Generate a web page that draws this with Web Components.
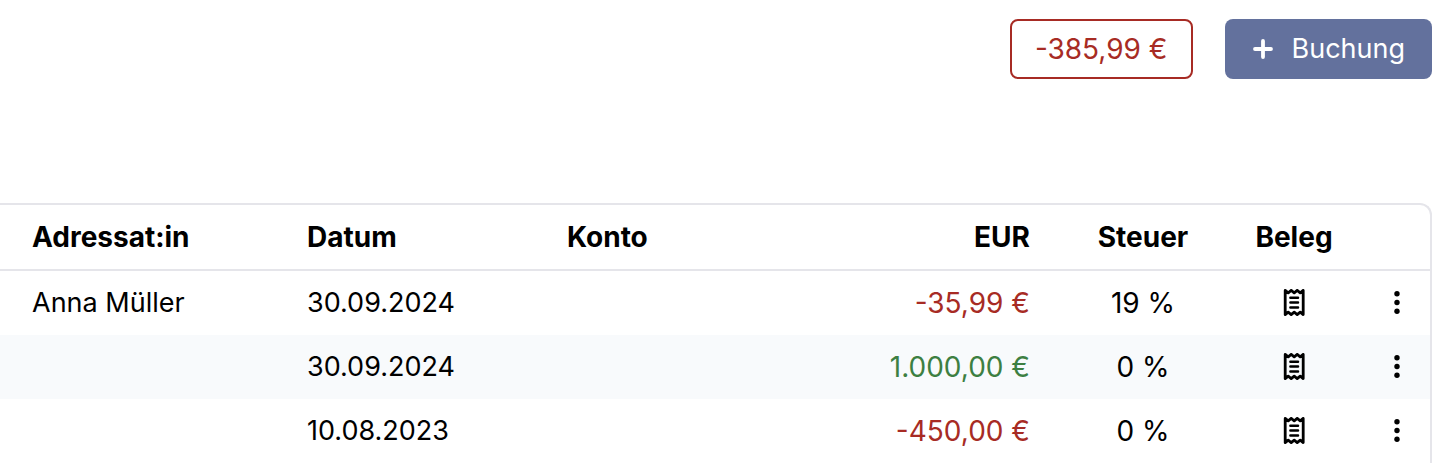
<!DOCTYPE html>
<html lang="de">
<head>
<meta charset="utf-8">
<meta name="viewport" content="width=device-width, initial-scale=1">
<title>Buchungen</title>
<style>
  body {
    margin: 0;
    background: #fff;
    color: #000;
    font: 28px/40px Inter, "Liberation Sans", sans-serif;
    --text-size: 27px;
    --negative: #a72b24;
    --positive: #3d7f42;
    --primary: #63719d;
    --line: #e5e5ea;
    --stripe: #f8fafc;
  }
</style>
</head>
<body>
<booking-page>
  <balance-badge slot="actions">-385,99 €</balance-badge>
  <add-button slot="actions">Buchung</add-button>
  <booking-table></booking-table>
</booking-page>

<script>
  const define = (name, html) => customElements.define(name, class extends HTMLElement {
    constructor() {
      super();
      this.attachShadow({ mode: 'open' }).innerHTML = html;
    }
  });

  define('booking-page', `
    <style>
      :host { display: block; padding: 19px 20px 0 0; }
      header { display: flex; justify-content: flex-end; gap: 32px; margin-bottom: 124px; }
    </style>
    <header><slot name="actions"></slot></header>
    <main><slot></slot></main>`);

  define('balance-badge', `
    <style>
      :host {
        display: block; box-sizing: border-box; padding: 8px 23px;
        border: 2px solid var(--negative); border-radius: 8px;
        color: var(--negative); white-space: nowrap;
      }
    </style>
    <slot></slot>`);

  define('add-button', `
    <style>
      :host { display: block; }
      button {
        display: flex; align-items: center; gap: 15px;
        padding: 10px 27px 10px 24px; border: 0; border-radius: 8px;
        background: var(--primary); color: #fff; font: inherit; font-size: var(--text-size); cursor: pointer;
      }
      svg { width: 28px; height: 28px; }
    </style>
    <button type="button">
      <svg viewBox="0 0 28 28" fill="none" stroke="currentColor" stroke-width="3.8" stroke-linecap="round" aria-hidden="true"><path d="M14 6v16M6 14h16"/></svg>
      <span><slot></slot></span>
    </button>`);

  const iconButton = (label, svg) => `
    <style>
      :host { display: flex; justify-content: center; }
      button { display: flex; padding: 0; border: 0; background: none; color: inherit; cursor: pointer; }
      svg { width: 28px; height: 28px; }
    </style>
    <button type="button" aria-label="${label}">${svg}</button>`;

  define('receipt-button', iconButton('Beleg anzeigen', `
    <svg viewBox="0 0 28 28" fill="none" stroke="currentColor" stroke-width="2.8" stroke-linejoin="round" stroke-linecap="round">
      <path d="M5.2 1.4 8.2 3.8 11.2 1.4 14.2 3.8 17.2 1.4 20.2 3.8 23.2 1.4V25.6L20.2 23.2 17.2 25.6 14.2 23.2 11.2 25.6 8.2 23.2 5.2 25.6Z"/>
      <path stroke-width="2.5" d="M10.4 8.8h7.6M10.4 13.6h7.6M10.4 18.4h7.6"/>
    </svg>`));

  define('menu-button', iconButton('Aktionen', `
    <svg viewBox="0 0 28 28" fill="currentColor">
      <circle cx="14" cy="4.7" r="2.7"/><circle cx="14" cy="13.5" r="2.7"/><circle cx="14" cy="22.3" r="2.7"/>
    </svg>`));

  define('money-amount', `
    <style>
      :host { color: var(--positive); white-space: nowrap; }
      :host([negative]) { color: var(--negative); }
    </style>
    <slot></slot>`);

  const bookings = [
    { name: 'Anna Müller', date: '30.09.2024', amount: '-35,99 €', tax: '19 %' },
    { name: '', date: '30.09.2024', amount: '1.000,00 €', tax: '0 %' },
    { name: '', date: '10.08.2023', amount: '-450,00 €', tax: '0 %' },
  ];

  define('booking-table', `
    <style>
      :host {
        display: block; overflow: hidden;
        border: solid var(--line); border-width: 2px 2px 0 0;
        border-top-right-radius: 12px;
      }
      table { width: 100%; table-layout: fixed; border-collapse: separate; border-spacing: 0; }
      th, td { padding: 12px 32px; text-align: left; white-space: nowrap; }
      th { font-weight: 700; border-bottom: 2px solid var(--line); }
      .text { font-size: var(--text-size); }
      .amount { text-align: right; }
      .center { padding-inline: 0; text-align: center; }
      tbody tr:nth-child(even) { background: var(--stripe); }
      .name { width: 211px; }
      .date { width: 196px; }
      .amount { width: 176px; }
      .tax { width: 162px; }
      .receipt { width: 140px; }
      .menu { width: 66px; }
    </style>
    <table>
      <thead>
        <tr>
          <th class="name" scope="col">Adressat:in</th>
          <th class="date" scope="col">Datum</th>
          <th scope="col">Konto</th>
          <th class="amount" scope="col">EUR</th>
          <th class="center tax" scope="col">Steuer</th>
          <th class="center receipt" scope="col">Beleg</th>
          <th class="center menu" scope="col"></th>
        </tr>
      </thead>
      <tbody>${bookings.map(b => `
        <tr>
          <td class="text">${b.name}</td>
          <td class="text">${b.date}</td>
          <td></td>
          <td class="amount"><money-amount${b.amount.startsWith('-') ? ' negative' : ''}>${b.amount}</money-amount></td>
          <td class="center">${b.tax}</td>
          <td class="center"><receipt-button></receipt-button></td>
          <td class="center"><menu-button></menu-button></td>
        </tr>`).join('')}
      </tbody>
    </table>`);
</script>
</body>
</html>
